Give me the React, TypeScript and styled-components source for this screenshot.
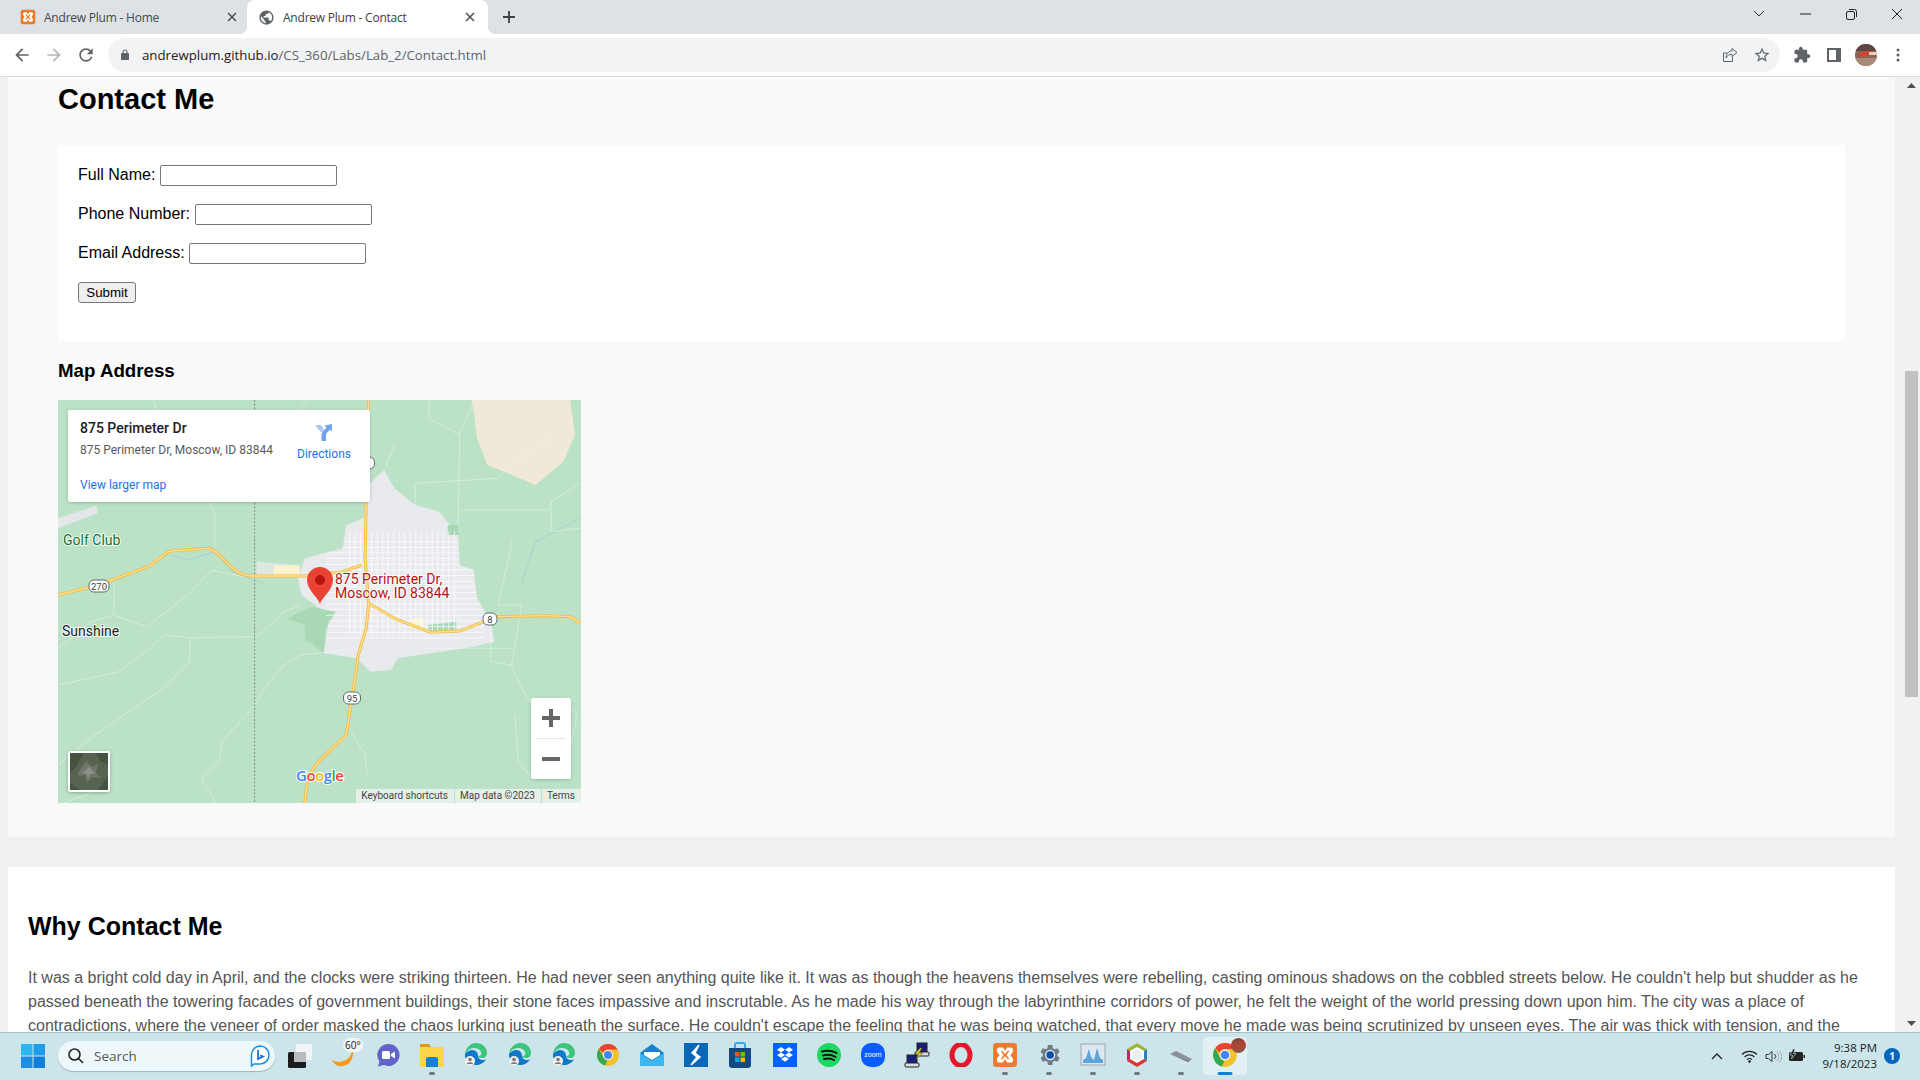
import React from 'react';
import styled, { createGlobalStyle } from 'styled-components';

const UI_FONT = `'Open Sans', 'Noto Sans', sans-serif`;
const PAGE_FONT = `'Liberation Sans', Arial, sans-serif`;
const MAP_FONT = `Roboto, 'Liberation Sans', sans-serif`;

const GlobalStyle = createGlobalStyle`
  html, body {
    margin: 0;
    padding: 0;
    height: 100%;
    overflow: hidden;
    background: #f0f0f0;
  }
  * {
    box-sizing: border-box;
  }
`;

const Icon = ({ d, size = 16, color = '#5f6368' }: { d: string; size?: number; color?: string }) => (
  <svg width={size} height={size} viewBox="0 0 24 24" fill={color}>
    <path d={d} />
  </svg>
);

const ICONS = {
  back: 'M20 11H7.83l5.59-5.59L12 4l-8 8 8 8 1.41-1.41L7.83 13H20v-2z',
  forward: 'M12 4l-1.41 1.41L16.17 11H4v2h12.17l-5.58 5.59L12 20l8-8z',
  reload:
    'M17.65 6.35C16.2 4.9 14.21 4 12 4c-4.42 0-7.99 3.58-7.99 8s3.57 8 7.99 8c3.73 0 6.84-2.55 7.73-6h-2.08c-.82 2.33-3.04 4-5.65 4-3.31 0-6-2.69-6-6s2.69-6 6-6c1.66 0 3.14.69 4.22 1.78L13 11h7V4l-2.35 2.35z',
  lock: 'M18 8h-1V6c0-2.76-2.24-5-5-5S7 3.24 7 6v2H6c-1.1 0-2 .9-2 2v10c0 1.1.9 2 2 2h12c1.1 0 2-.9 2-2V10c0-1.1-.9-2-2-2zM9 6c0-1.66 1.34-3 3-3s3 1.34 3 3v2H9V6z',
  star: 'M22 9.24l-7.19-.62L12 2 9.19 8.63 2 9.24l5.46 4.73L5.82 21 12 17.27 18.18 21l-1.63-7.03L22 9.24zM12 15.4l-3.76 2.27 1-4.28-3.32-2.88 4.38-.38L12 6.1l1.71 4.04 4.38.38-3.32 2.88 1 4.28L12 15.4z',
  puzzle:
    'M20.5 11H19V7c0-1.1-.9-2-2-2h-4V3.5C13 2.12 11.88 1 10.5 1S8 2.12 8 3.5V5H4c-1.1 0-1.99.9-1.99 2v3.8H3.5c1.49 0 2.7 1.21 2.7 2.7s-1.21 2.7-2.7 2.7H2V20c0 1.1.9 2 2 2h3.8v-1.5c0-1.49 1.21-2.7 2.7-2.7 1.49 0 2.7 1.21 2.7 2.7V22H17c1.1 0 2-.9 2-2v-4h1.5c1.38 0 2.5-1.12 2.5-2.5S21.88 11 20.5 11z',
  globe:
    'M12 2C6.48 2 2 6.48 2 12s4.48 10 10 10 10-4.48 10-10S17.52 2 12 2zm-1 17.93c-3.95-.49-7-3.85-7-7.93 0-.62.08-1.21.21-1.79L9 15v1c0 1.1.9 2 2 2v1.93zm6.9-2.54c-.26-.81-1-1.39-1.9-1.39h-1v-3c0-.55-.45-1-1-1H8v-2h2c.55 0 1-.45 1-1V7h2c1.1 0 2-.9 2-2v-.41c2.93 1.19 5 4.06 5 7.41 0 2.08-.8 3.97-2.1 5.39z',
};

const Xampp = ({ size = 16 }: { size?: number }) => (
  <svg width={size} height={size} viewBox="0 0 24 24">
    <rect x="1" y="1" width="22" height="22" rx="3" fill="#ee7a2d" />
    <path
      d="M7 5h3l2 3 2-3h3a2.5 2.5 0 0 1 2.5 2.5c0 2-1.5 3-2.5 4.5 1 1.5 2.5 2.5 2.5 4.5A2.5 2.5 0 0 1 17 19h-3l-2-3-2 3H7a2.5 2.5 0 0 1-2.5-2.5c0-2 1.500-3 2.500-4.500-1-1.500-2.500-2.500-2.500-4.500A2.500 2.500 0 0 1 7 5z"
      fill="#fff"
    />
    <path d="M8 8h1.5L12 11l2.5-3H16l-2.5 4 2.500 4h-1.500L12 13l-2.500 3H8l2.500-4z" fill="#ee7a2d" />
  </svg>
);

const Chrome = ({ size = 24 }: { size?: number }) => (
  <svg width={size} height={size} viewBox="0 0 24 24">
    <circle cx="12" cy="12" r="11" fill="#f2c12e" />
    <path d="M12 1a11 11 0 0 1 9.530 5.500H12a5.500 5.500 0 0 0-5 3.200L2.900 5.800A11 11 0 0 1 12 1z" fill="#ea4335" />
    <path d="M2.900 5.800L7.500 14.500a5.500 5.500 0 0 0 4 3L9 22.600A11 11 0 0 1 2.900 5.800z" fill="#34a853" />
    <circle cx="12" cy="12" r="5" fill="#fff" />
    <circle cx="12" cy="12" r="4" fill="#4285f4" />
  </svg>
);

const Edge = () => (
  <svg width="24" height="26" viewBox="0 0 24 26">
    <path d="M1 12C2 5 7 1 12 1c6 0 11 4 11 10 0 3-2 5-5 5-2 0-4-1-4-2 3 0 4-2 3-4-1-3-4-4-7-4-4 0-7 2-9 6z" fill="#3bc47c" />
    <path d="M1 12c2-3 5-4 7-4 4 0 6 3 6 6 0 2 2 4 5 4 1 0 2 0 3-1-2 4-6 6-10 6C6 23 0 18 1 12z" fill="#0f78c9" />
    <circle cx="6" cy="19" r="5" fill="#eeeeee" />
    <circle cx="6" cy="17.500" r="1.800" fill="#777" />
    <path d="M2.800 22c.5-2.500 5.900-2.500 6.400 0z" fill="#777" />
  </svg>
);

const Avatar = () => (
  <svg width="22" height="22" viewBox="0 0 22 22">
    <clipPath id="avatar-clip">
      <circle cx="11" cy="11" r="11" />
    </clipPath>
    <g clipPath="url(#avatar-clip)">
      <rect width="22" height="22" fill="#8a6658" />
      <rect width="22" height="7" fill="#5e453f" />
      <path d="M3 11l5-3 8-1 2 3-6 2-6 1z" fill="#d9412a" />
      <path d="M14 8h8v3h-8z" fill="#e6cfc0" />
      <path d="M0 14h22v8H0z" fill="#a98a78" />
    </g>
  </svg>
);

const TASK_APPS: { key: string; art: React.ReactNode; running?: boolean; active?: boolean }[] = [
  {
    key: 'view',
    art: (
      <svg width="26" height="26" viewBox="0 0 26 26">
        <rect x="9" y="2" width="16" height="16" rx="1.500" fill="#f2f4f5" />
        <rect x="1" y="10" width="18" height="16" rx="1.500" fill="#1c1c1c" />
        <rect x="7" y="10" width="12" height="10" fill="#b9bcbe" />
      </svg>
    ),
  },
  {
    key: 'weather',
    art: (
      <svg width="26" height="26" viewBox="0 0 26 26">
        <path d="M21 5c1 8-4 14-13 15-2 0-5-1-7-2 2 5 7 7 11 6 8-1 12-10 9-19z" fill="#f39a1f" />
      </svg>
    ),
  },
  {
    key: 'teams',
    art: (
      <svg width="24" height="24" viewBox="0 0 24 24">
        <path d="M12 1a11 11 0 1 1-4 21l-6 1.500 1.500-5A11 11 0 0 1 12 1z" fill="#6264c8" />
        <rect x="6" y="8" width="8" height="8" rx="1.500" fill="#fff" />
        <path d="M15 11l4-2.500v7L15 13z" fill="#fff" />
      </svg>
    ),
  },
  {
    key: 'files',
    running: true,
    art: (
      <svg width="26" height="26" viewBox="0 0 26 26">
        <path d="M1 2h9l2 3h13v3H1z" fill="#d99b12" />
        <rect x="1" y="5" width="24" height="20" fill="#fbd54a" />
        <path d="M7 17a2 2 0 0 1 2-2h8a2 2 0 0 1 2 2v8H7z" fill="#1680d6" />
      </svg>
    ),
  },
  { key: 'edge1', art: <Edge /> },
  { key: 'edge2', art: <Edge /> },
  { key: 'edge3', art: <Edge /> },
  { key: 'chrome', art: <Chrome /> },
  {
    key: 'mail',
    art: (
      <svg width="24" height="24" viewBox="0 0 24 24">
        <path d="M0 10L12 1l12 9v13H0z" fill="#1a7fd0" />
        <path d="M0 10l12 8 12-8v13H0z" fill="#3fb6ec" />
        <path d="M4 9h16v3l-8 5-8-5z" fill="#fff" />
      </svg>
    ),
  },
  {
    key: 'sublime',
    art: (
      <svg width="24" height="24" viewBox="0 0 24 24">
        <rect width="24" height="24" fill="#0a66b7" />
        <path d="M15 2L8 10l5 4-6 8 9-8-5-4z" fill="#fff" stroke="#fff" strokeWidth="1.500" />
      </svg>
    ),
  },
  {
    key: 'store',
    art: (
      <svg width="24" height="26" viewBox="0 0 24 26">
        <path d="M7 6V3a2 2 0 0 1 2-2h6a2 2 0 0 1 2 2v3" fill="none" stroke="#38a7e0" strokeWidth="2" />
        <path d="M1 6h22v17a3 3 0 0 1-3 3H4a3 3 0 0 1-3-3z" fill="#144a80" />
        <rect x="7" y="10" width="4.500" height="4.500" fill="#f25022" />
        <rect x="12.500" y="10" width="4.500" height="4.500" fill="#7fba00" />
        <rect x="7" y="15.500" width="4.500" height="4.500" fill="#00a4ef" />
        <rect x="12.500" y="15.500" width="4.500" height="4.500" fill="#ffb900" />
      </svg>
    ),
  },
  {
    key: 'dropbox',
    art: (
      <svg width="24" height="24" viewBox="0 0 24 24">
        <rect width="24" height="24" fill="#0061fe" />
        <path d="M8 4l4 2.700L8 9.400 4 6.700zM16 4l4 2.700-4 2.700-4-2.700zM8 9.400l4 2.700-4 2.700-4-2.700zM16 9.400l4 2.700-4 2.700-4-2.700zM8 16l4-2.600 4 2.600-4 2.700z" fill="#fff" />
      </svg>
    ),
  },
  {
    key: 'spotify',
    art: (
      <svg width="24" height="24" viewBox="0 0 24 24">
        <circle cx="12" cy="12" r="12" fill="#1ed760" />
        <path d="M5 8.500c5-1.500 10-1 14.500 1.500M6 12.500c4-1 9-.7 12.500 1.500M7 16c3.500-.8 7.500-.5 10 1" fill="none" stroke="#111" strokeWidth="2" strokeLinecap="round" />
      </svg>
    ),
  },
  {
    key: 'zoom',
    art: (
      <svg width="24" height="24" viewBox="0 0 24 24">
        <rect width="24" height="24" rx="10" fill="#0b5cff" />
        <text x="12" y="14" textAnchor="middle" fontFamily={MAP_FONT} fontSize="7" fill="#fff">
          zoom
        </text>
      </svg>
    ),
  },
  {
    key: 'putty',
    art: (
      <svg width="26" height="26" viewBox="0 0 26 26">
        <rect x="13" y="1" width="10" height="9" fill="#1b1f7a" stroke="#222" />
        <rect x="11" y="10" width="14" height="4" rx="1" fill="#ddd" stroke="#222" />
        <rect x="3" y="13" width="10" height="9" fill="#1b1f7a" stroke="#222" />
        <rect x="1" y="21" width="14" height="4" rx="1" fill="#ddd" stroke="#222" />
        <path d="M16 6l-5 6h4l-4 6 8-7h-4l3-5z" fill="#f6d81c" stroke="#333" strokeWidth=".5" />
      </svg>
    ),
  },
  {
    key: 'opera',
    art: (
      <svg width="24" height="24" viewBox="0 0 24 24">
        <ellipse cx="12" cy="12" rx="9" ry="10.500" fill="none" stroke="#e5182a" strokeWidth="5" />
      </svg>
    ),
  },
  { key: 'xampp', running: true, art: <Xampp size={26} /> },
  {
    key: 'settings',
    running: true,
    art: (
      <svg width="28" height="28" viewBox="0 0 24 24">
        <path d="M19.140 12.940a7.400 7.400 0 0 0 0-1.880l2.030-1.580-1.920-3.320-2.390.96a7 7 0 0 0-1.620-.94L14.880 3.500h-3.840l-.36 2.680a7 7 0 0 0-1.620.94l-2.390-.96-1.920 3.320 2.030 1.580a7.400 7.400 0 0 0 0 1.880l-2.030 1.580 1.920 3.320 2.390-.96c.5.380 1.040.7 1.620.94l.36 2.680h3.840l.36-2.680a7 7 0 0 0 1.620-.94l2.390.96 1.920-3.320z" fill="#6f7b86" />
        <circle cx="13" cy="12" r="3.800" fill="#0a4ea8" stroke="#dfe6ea" strokeWidth="1.200" />
      </svg>
    ),
  },
  {
    key: 'monitor',
    running: true,
    art: (
      <svg width="26" height="24" viewBox="0 0 26 24">
        <rect x="1" y="1" width="24" height="21" fill="#dfe7ee" stroke="#9aa5ad" />
        <path d="M3 20V17l3-2 3-9 2 8 3 3 3-12 3 10 3 2v3z" fill="#5aa5dc" />
      </svg>
    ),
  },
  {
    key: 'box',
    running: true,
    art: (
      <svg width="24" height="26" viewBox="0 0 24 26">
        <path d="M12 1l10 6v12l-10 6-10-6V7z" fill="#fff" />
        <path d="M12 1l10 6-3 2-7-4-7 4-3-2z" fill="#9ab83c" />
        <path d="M2 7l3 2v8l-3 2z" fill="#c2246a" />
        <path d="M22 7l-3 2v8l3 2z" fill="#2d7fc1" />
        <path d="M2 19l3-2 7 4 7-4 3 2-10 6z" fill="#d9362f" />
        <path d="M7 10l5-3 5 3v6l-5 3-5-3z" fill="#e8eef0" />
      </svg>
    ),
  },
  {
    key: 'snip',
    running: true,
    art: (
      <svg width="24" height="16" viewBox="0 0 24 16">
        <path d="M1 7l6-3 16 8-4 2z" fill="#8b9297" />
        <path d="M1 7l18 7 4-2-4 3z" fill="#4f5459" />
      </svg>
    ),
  },
  {
    key: 'chrome-active',
    active: true,
    art: <Chrome size={26} />,
  },
];

const App: React.FC = () => {
  return (
    <Screen>
      <GlobalStyle />
      <TabStrip>
        <Tab>
          <Xampp />
          <TabTitle>Andrew Plum - Home</TabTitle>
          <CloseGlyph />
        </Tab>
        <Tab $active>
          <Icon d={ICONS.globe} size={17} />
          <TabTitle>Andrew Plum - Contact</TabTitle>
          <CloseGlyph />
        </Tab>
        <NewTab>
          <svg width="14" height="14" viewBox="0 0 14 14">
            <path d="M7 1v12M1 7h12" stroke="#3c4043" strokeWidth="1.800" />
          </svg>
        </NewTab>
        <WindowControls>
          <WindowButton>
            <svg width="12" height="8" viewBox="0 0 12 8">
              <path d="M1 1l5 5 5-5" fill="none" stroke="#333" />
            </svg>
          </WindowButton>
          <WindowButton>
            <svg width="11" height="2" viewBox="0 0 11 2">
              <path d="M0 1h11" stroke="#222" />
            </svg>
          </WindowButton>
          <WindowButton>
            <svg width="11" height="11" viewBox="0 0 11 11">
              <rect x=".5" y="2.500" width="8" height="8" rx="1.500" fill="none" stroke="#222" />
              <path d="M3 .5h5.500a2 2 0 0 1 2 2V8" fill="none" stroke="#222" />
            </svg>
          </WindowButton>
          <WindowButton>
            <svg width="12" height="12" viewBox="0 0 12 12">
              <path d="M1 1l10 10M11 1L1 11" stroke="#222" />
            </svg>
          </WindowButton>
        </WindowControls>
      </TabStrip>

      <Toolbar>
        <ToolButton>
          <Icon d={ICONS.back} size={20} />
        </ToolButton>
        <ToolButton>
          <Icon d={ICONS.forward} size={20} color="#b4b6b9" />
        </ToolButton>
        <ToolButton>
          <Icon d={ICONS.reload} size={20} />
        </ToolButton>
        <Omnibox>
          <LockSlot>
            <Icon d={ICONS.lock} size={12} />
          </LockSlot>
          <Url>
            andrewplum.github.io<UrlPath>/CS_360/Labs/Lab_2/Contact.html</UrlPath>
          </Url>
          <ToolButton>
            <svg width="16" height="16" viewBox="0 0 16 16" fill="none" stroke="#5f6368" strokeWidth="1">
              <path d="M10.500 9.500V14.500H1.500V6H5" />
              <path d="M10 1.500L15 5.500 10 9.500V7.300C7 7.300 5.500 8.500 4 11 4 7.500 6 4 10 3.800z" />
            </svg>
          </ToolButton>
          <ToolButton>
            <Icon d={ICONS.star} size={18} />
          </ToolButton>
        </Omnibox>
        <ToolButton>
          <Icon d={ICONS.puzzle} size={18} />
        </ToolButton>
        <ToolButton>
          <svg width="14" height="14" viewBox="0 0 14 14">
            <path fillRule="evenodd" d="M0 0h14v14H0zM2 2v10h7V2z" fill="#5f6368" />
          </svg>
        </ToolButton>
        <ToolButton>
          <Avatar />
        </ToolButton>
        <ToolButton>
          <svg width="4" height="14" viewBox="0 0 4 14" fill="#5f6368">
            <circle cx="2" cy="2" r="1.500" />
            <circle cx="2" cy="7" r="1.500" />
            <circle cx="2" cy="12" r="1.500" />
          </svg>
        </ToolButton>
      </Toolbar>

      <Viewport>
        <Page>
          <ContactCard>
            <PageTitle>Contact Me</PageTitle>
            <FormBox>
              <FormRow>
                Full Name: <TextInput />
              </FormRow>
              <FormRow>
                Phone Number: <TextInput />
              </FormRow>
              <FormRow>
                Email Address: <TextInput />
              </FormRow>
              <SubmitButton>Submit</SubmitButton>
            </FormBox>
            <MapTitle>Map Address</MapTitle>
            <MapFrame>
              <MapDrawing />
              <InfoCard>
                <InfoText>
                  <PlaceName>875 Perimeter Dr</PlaceName>
                  <PlaceAddress>875 Perimeter Dr, Moscow, ID 83844</PlaceAddress>
                  <LargerMap>View larger map</LargerMap>
                </InfoText>
                <Directions>
                  <svg width="20" height="20" viewBox="0 0 20 20">
                    <path d="M1 3h6l3 5-3 2.500z" fill="#a9c7f5" />
                    <path d="M7.500 19v-6c0-3 3-5 5-7.500L10.500 3.500 18 2v7.500L16 7.500c-2 2.500-4 3.500-4 6V19z" fill="#6fa3ee" />
                  </svg>
                  <span>Directions</span>
                </Directions>
              </InfoCard>
              <ZoomControl>
                <ZoomButton>
                  <svg width="18" height="18" viewBox="0 0 18 18">
                    <path d="M9 0v18M0 9h18" stroke="#666" strokeWidth="4" />
                  </svg>
                </ZoomButton>
                <ZoomDivider />
                <ZoomButton>
                  <svg width="18" height="4" viewBox="0 0 18 4">
                    <path d="M0 2h18" stroke="#666" strokeWidth="4" />
                  </svg>
                </ZoomButton>
              </ZoomControl>
              <SatelliteThumb>
                <svg width="38" height="37" viewBox="0 0 38 37">
                  <rect width="38" height="37" fill="#566350" />
                  <path d="M0 0h14L6 14 0 20zM26 0h12v12L30 8zM28 37l10-14v14zM0 30l10 7H0z" fill="#45523f" />
                  <path d="M8 20l8-12 6 6 6-4-2 10 6 5-10-1-5 6-2-8-6 1z" fill="#6f776a" />
                  <path d="M15 18l5-5 2 5 4 2-6 1-2 5-1-5-4-1z" fill="#8d9288" />
                </svg>
              </SatelliteThumb>
              <Attribution>
                <AttributionItem>Keyboard shortcuts</AttributionItem>
                <AttributionItem>Map data ©2023</AttributionItem>
                <AttributionItem>Terms</AttributionItem>
              </Attribution>
            </MapFrame>
          </ContactCard>
          <WhyCard>
            <SectionTitle>Why Contact Me</SectionTitle>
            <Story>
              It was a bright cold day in April, and the clocks were striking thirteen. He had never seen anything
              quite like it. It was as though the heavens themselves were rebelling, casting ominous shadows on the
              cobbled streets below. He couldn't help but shudder as he passed beneath the towering facades of
              government buildings, their stone faces impassive and inscrutable. As he made his way through the
              labyrinthine corridors of power, he felt the weight of the world pressing down upon him. The city was a
              place of contradictions, where the veneer of order masked the chaos lurking just beneath the surface.
              He couldn't escape the feeling that he was being watched, that every move he made was being scrutinized
              by unseen eyes. The air was thick with tension, and the
            </Story>
          </WhyCard>
        </Page>
        <Scrollbar>
          <ScrollArrow>
            <svg width="9" height="5" viewBox="0 0 9 5">
              <path d="M4.500 0L9 5H0z" fill="#505050" />
            </svg>
          </ScrollArrow>
          <ScrollTrack>
            <ScrollThumb />
          </ScrollTrack>
          <ScrollArrow>
            <svg width="9" height="5" viewBox="0 0 9 5">
              <path d="M0 0h9L4.500 5z" fill="#505050" />
            </svg>
          </ScrollArrow>
        </Scrollbar>
      </Viewport>

      <Taskbar>
        <StartButton>
          <svg width="24" height="24" viewBox="0 0 24 24">
            <path d="M0 0h11.500v11.500H0z" fill="#2fb4f2" />
            <path d="M12.500 0H24v11.500H12.500z" fill="#1f9cea" />
            <path d="M0 12.500h11.500V24H0z" fill="#1a8fe3" />
            <path d="M12.500 12.500H24V24H12.500z" fill="#0f7fd8" />
          </svg>
        </StartButton>
        <SearchPill>
          <svg width="18" height="18" viewBox="0 0 18 18" fill="none" stroke="#222" strokeWidth="1.600">
            <circle cx="7.500" cy="7.500" r="5.500" />
            <path d="M11.500 11.500L16 16" />
          </svg>
          <SearchLabel>Search</SearchLabel>
          <svg width="20" height="22" viewBox="0 0 20 22">
            <path d="M10 1a9 9 0 0 1 0 18H4l-2.500 2V10A9 9 0 0 1 10 1z" fill="#fff" stroke="#1b8fe8" strokeWidth="1.500" />
            <path d="M8 5v9l5-2.500-2.800-1.200" fill="none" stroke="#1b6fe0" strokeWidth="1.800" />
          </svg>
        </SearchPill>
        <TaskList>
          {TASK_APPS.map((app) => (
            <TaskItem key={app.key} $running={app.running} $active={app.active}>
              {app.art}
              {app.key === 'weather' && <WeatherBadge>60°</WeatherBadge>}
              {app.active && <AvatarBadge />}
            </TaskItem>
          ))}
        </TaskList>
        <Tray>
          <TrayIcon $gap={8}>
            <svg width="12" height="7" viewBox="0 0 12 7">
              <path d="M1 6l5-5 5 5" fill="none" stroke="#222" strokeWidth="1.300" />
            </svg>
          </TrayIcon>
          <TrayIcon>
            <svg width="17" height="13" viewBox="0 0 17 13" fill="none" stroke="#222" strokeWidth="1.100">
              <path d="M1 4.500a10.500 10.500 0 0 1 15 0M3.500 7a7 7 0 0 1 10 0M6 9.500a3.500 3.500 0 0 1 5 0" />
              <circle cx="8.500" cy="11.500" r=".8" fill="#222" />
            </svg>
          </TrayIcon>
          <TrayIcon>
            <svg width="17" height="13" viewBox="0 0 17 13" fill="none" stroke="#333" strokeWidth="1">
              <path d="M1 4.500h2.500L7 1.500v10L3.500 8.500H1z" />
              <path d="M9.500 4a3.500 3.500 0 0 1 0 5" />
              <path d="M12 2a7 7 0 0 1 0 9M14.500.5a9.500 9.500 0 0 1 0 12" stroke="#aaa" />
            </svg>
          </TrayIcon>
          <TrayIcon>
            <svg width="18" height="14" viewBox="0 0 18 14">
              <rect x="1" y="3" width="14" height="9" rx="1.500" fill="#222" />
              <rect x="15.500" y="6" width="1.500" height="3" fill="#222" />
              <path d="M5 0L2 6h2.500L3.500 10 8 4.500H5.500L7 0z" fill="#222" stroke="#cbe5ec" strokeWidth=".6" />
            </svg>
          </TrayIcon>
          <Clock>
            <span>9:38 PM</span>
            <span>9/18/2023</span>
          </Clock>
          <NotificationBadge>1</NotificationBadge>
        </Tray>
      </Taskbar>
    </Screen>
  );
};

export default App;

const CloseGlyph = () => (
  <CloseSlot>
    <svg width="10" height="10" viewBox="0 0 10 10">
      <path d="M1 1l8 8M9 1L1 9" stroke="#4b4e52" strokeWidth="1.500" />
    </svg>
  </CloseSlot>
);

// coordinates traced at 2.904 x 3 from the reference crop, origin 50,395 of the page
const WHITE_ROADS = [
  'M460 321L478 350V460',
  'M23 760L120 680 185 660 186 570',
  'M23 870L200 830 290 760 330 720 410 728 600 725 640 690 680 650 730 630',
  'M408 728L405 800 330 880 130 1020 23 1110',
  'M185 660L280 695 400 600 470 525 560 545',
  'M595 930L500 1040 490 1100 440 1150 480 1224',
  'M900 760L730 780 680 810 630 870 595 930',
  'M1100 20V70L1190 120 1185 390',
  'M1000 150L975 215',
  'M1190 345H1450L1455 320 1540 265',
  'M1455 320V410L1540 400',
  'M1060 270V330',
  'M1060 265L1300 250 1340 205 1450 130',
  'M1340 440L1330 500 1300 630H1370L1340 810 1280 800V680',
  'M1100 760H1340',
  'M1340 810L1370 880 1400 930',
  'M870 1000L915 1080 920 1140',
  'M1500 920L1530 960 1510 1060',
  'M1350 960L1360 1100 1400 1150',
  'M1230 20L1187 120',
  'M300 15L310 45',
  'M720 45L750 15',
  'M40 1224L180 1170',
];

const CITY_SHAPE =
  'M970 225L1000 280 1060 330 1130 350 1185 420 1190 510 1230 525 1240 610 1280 680 1290 740 1230 755 1010 790 990 825 930 830 890 790 795 775 810 670 770 630 730 600 720 550 740 490 850 460 860 390 910 370 925 270z';

const HIGHWAYS = [
  'M23 600L110 578 180 555 285 515C310 500 330 475 350 468L460 460C480 465 500 490 520 510 540 530 555 540 580 543L740 543 850 530 905 510',
  'M925 15L918 320 915 490 925 630 918 700 895 780 880 890 860 1020 780 1100C760 1125 745 1145 740 1224',
  'M925 625L1000 670 1105 712 1190 708 1260 680 1300 665 1440 662 1510 665 1542 685',
];

const MapDrawing: React.FC = () => (
  <MapSvg width="523" height="403" viewBox="0 0 523 403">
    <defs>
      <clipPath id="city">
        <path d={CITY_SHAPE} />
      </clipPath>
    </defs>
    <rect width="523" height="403" fill="#bbe2c6" />
    <g transform="translate(-8 -5) scale(.3444 .3333)">
      <path d="M1225 15L1240 130 1270 210 1410 270 1490 200 1525 120 1510 15z" fill="#f0e9d8" />
      <path d="M23 370L135 332 138 355 23 400z" fill="#e4e7ea" />
      <path d="M600 500L720 510V540H600z" fill="#dfe8dc" />
      <path d="M650 512H725V540H650z" fill="#fbf3cf" />
      <path d="M915 790H1010L990 825 930 830z" fill="#d5dcd8" />
      <path d={CITY_SHAPE} fill="#e8eaed" />
      <path d="M690 670L760 635 830 650 800 700 795 775 740 730 740 690z" fill="#a8d8b4" />
      <path d="M1095 690L1180 680V705L1105 712z" fill="#a8d8b4" />
      <path d="M1155 390H1185V420H1155z" fill="#a8d8b4" />
      <path d="M1050 670H1085V700H1050z" fill="#fbf3cf" />
      <g clipPath="url(#city)" stroke="#fff" strokeWidth="2.500" fill="none" opacity=".9">
        {Array.from({ length: 20 }, (_, i) => (
          <path key={`v${i}`} d={`M${870 + i * 16} 410V720`} />
        ))}
        {Array.from({ length: 18 }, (_, i) => (
          <path key={`h${i}`} d={`M800 ${440 + i * 17}H1260`} />
        ))}
      </g>
      <g stroke="#fff" strokeWidth="2" fill="none" opacity=".55">
        {WHITE_ROADS.map((d) => (
          <path key={d} d={d} />
        ))}
      </g>
      <g stroke="#9dc9dc" strokeWidth="2" fill="none">
        <path d="M1540 370L1410 440 1370 560" />
        <path d="M350 480L400 495 480 470 530 530 620 565" />
      </g>
      <path d="M594 15V1224" stroke="#7a7a7a" strokeWidth="2.500" strokeDasharray="6 5" />
      <g fill="none" strokeLinejoin="round">
        {HIGHWAYS.map((d) => (
          <path key={d} d={d} stroke="#f5b83d" strokeWidth="9" />
        ))}
        {HIGHWAYS.map((d) => (
          <path key={`${d}-in`} d={d} stroke="#fde293" strokeWidth="4" />
        ))}
      </g>
    </g>

    <Shield cx={41} cy={186} w={20} label="270" />
    <Shield cx={432} cy={219} w={14} label="8" />
    <Shield cx={294} cy={298} w={17} label="95" />
    <Shield cx={308} cy={63} w={17} label="" />

    <path d="M262 204c-2-7-13-14-13-24a13 13 0 0 1 26 0c0 10-11 17-13 24z" fill="#ea4335" />
    <circle cx="262" cy="180" r="5" fill="#b31412" />

    <MapLabel x="277" y="184" fill="#b31412">875 Perimeter Dr,</MapLabel>
    <MapLabel x="277" y="198" fill="#b31412">Moscow, ID 83844</MapLabel>
    <MapLabel x="5" y="145" fill="#137333">Golf Club</MapLabel>
    <MapLabel x="4" y="236" fill="#202124">Sunshine</MapLabel>
    <GoogleMark x="238" y="381">
      <tspan fill="#4285f4">G</tspan>
      <tspan fill="#ea4335">o</tspan>
      <tspan fill="#fbbc04">o</tspan>
      <tspan fill="#4285f4">g</tspan>
      <tspan fill="#34a853">l</tspan>
      <tspan fill="#ea4335">e</tspan>
    </GoogleMark>
  </MapSvg>
);

const Shield = ({ cx, cy, w, label }: { cx: number; cy: number; w: number; label: string }) => (
  <g>
    <rect x={cx - w / 2} y={cy - 6} width={w} height={12} rx={5} fill="#fff" stroke="#5f6a6e" />
    <text x={cx} y={cy + 3.5} textAnchor="middle" fontFamily={MAP_FONT} fontSize="9.500" fill="#3c4043">
      {label}
    </text>
  </g>
);

const Screen = styled.div`
  width: 1920px;
  height: 1080px;
  display: flex;
  flex-direction: column;
  overflow: hidden;
  font-family: ${UI_FONT};
`;

const TabStrip = styled.div`
  height: 34px;
  padding-left: 8px;
  flex: none;
  display: flex;
  background: #dee1e6;
`;

const Tab = styled.div<{ $active?: boolean }>`
  width: ${(p) => (p.$active ? 241 : 239)}px;
  height: 34px;
  padding: 0 ${(p) => (p.$active ? 10 : 7)}px 0 ${(p) => (p.$active ? 11 : 12)}px;
  position: relative;
  display: flex;
  align-items: center;
  border-radius: 8px 8px 0 0;
  background: ${(p) => (p.$active ? '#fff' : 'transparent')};
  color: ${(p) => (p.$active ? '#3c4043' : '#45494e')};

  ${(p) =>
    p.$active &&
    `
    &::before, &::after {
      content: '';
      position: absolute;
      bottom: 0;
      width: 8px;
      height: 8px;
    }
    &::before {
      left: -8px;
      background: radial-gradient(circle at 0 0, transparent 8px, #fff 8.5px);
    }
    &::after {
      right: -8px;
      background: radial-gradient(circle at 100% 0, transparent 8px, #fff 8.5px);
    }
  `}
`;

const TabTitle = styled.span`
  margin-left: 8px;
  flex: 1;
  font-size: 12px;
  letter-spacing: -0.22px;
  white-space: nowrap;
`;

const CloseSlot = styled.span`
  width: 16px;
  height: 16px;
  display: flex;
  align-items: center;
  justify-content: center;
`;

const NewTab = styled.div`
  width: 30px;
  height: 34px;
  margin-left: 6px;
  display: flex;
  align-items: center;
  justify-content: center;
`;

const WindowControls = styled.div`
  margin-left: auto;
  display: flex;
`;

const WindowButton = styled.div`
  width: 46px;
  height: 28px;
  display: flex;
  align-items: center;
  justify-content: center;
`;

const Toolbar = styled.div`
  height: 43px;
  padding: 4px 6px 5px;
  flex: none;
  display: flex;
  align-items: center;
  background: #fff;
  border-bottom: 1px solid #dadce0;
`;

const ToolButton = styled.div`
  width: 32px;
  height: 32px;
  flex: none;
  display: flex;
  align-items: center;
  justify-content: center;
`;

const Omnibox = styled.div`
  width: 1672px;
  height: 34px;
  margin: 0 6px;
  padding-right: 2px;
  display: flex;
  align-items: center;
  border-radius: 17px;
  background: #f1f3f4;
`;

const LockSlot = styled.div`
  width: 34px;
  display: flex;
  justify-content: center;
`;

const Url = styled.div`
  flex: 1;
  font-size: 13.25px;
  color: #202124;
  white-space: nowrap;
`;

const UrlPath = styled.span`
  color: #5f6368;
`;

const Viewport = styled.div`
  flex: 1;
  min-height: 0;
  display: flex;
  background: #f0f0f0;
`;

const Page = styled.div`
  width: 1903px;
  padding: 0 8px;
  overflow: hidden;
`;

const ContactCard = styled.section`
  height: 760px;
  margin-bottom: 30px;
  padding: 6px 50px 0;
  background: #f9f9f9;
`;

const PageTitle = styled.h1`
  margin: 0 0 29px;
  font-family: ${PAGE_FONT};
  font-size: 29px;
  line-height: 33px;
  font-weight: 700;
  color: #000;
`;

const FormBox = styled.form`
  height: 196px;
  padding: 20px;
  background: #fff;
`;

const FormRow = styled.label`
  height: 21px;
  margin-bottom: 18px;
  display: flex;
  align-items: flex-start;
  font-family: ${PAGE_FONT};
  font-size: 16px;
  line-height: 20px;
  color: #000;
  white-space: pre;
`;

const TextInput = styled.input`
  width: 177px;
  height: 21px;
  padding: 1px 2px;
  background: #fff;
  border: 1px solid #767676;
  border-radius: 2px;
`;

const SubmitButton = styled.button.attrs({ type: 'button' })`
  width: 58px;
  height: 21px;
  padding: 0;
  display: block;
  background: #efefef;
  border: 1px solid #767676;
  border-radius: 3px;
  font-family: ${PAGE_FONT};
  font-size: 13.33px;
  color: #000;
`;

const MapTitle = styled.h3`
  margin: 19px 0 18px;
  font-family: ${PAGE_FONT};
  font-size: 18.72px;
  font-weight: 700;
  line-height: 22px;
  color: #000;
`;

const MapFrame = styled.div`
  width: 523px;
  height: 403px;
  position: relative;
  overflow: hidden;
`;

const MapSvg = styled.svg`
  display: block;
`;

const MapLabel = styled.text`
  font-family: ${MAP_FONT};
  font-size: 14px;
  paint-order: stroke;
  stroke: #ffffff;
  stroke-width: 2px;
  stroke-opacity: 0.85;
`;

const GoogleMark = styled.text`
  font-family: 'Open Sans', ${MAP_FONT};
  font-size: 15px;
  font-weight: 600;
  letter-spacing: -0.5px;
  paint-order: stroke;
  stroke: #ffffff;
  stroke-width: 2px;
`;

const InfoCard = styled.div`
  width: 302px;
  height: 92px;
  padding: 9px 19px 0 12px;
  position: absolute;
  top: 10px;
  left: 10px;
  display: flex;
  justify-content: space-between;
  background: #fff;
  border-radius: 2px;
  box-shadow: 0 1px 4px -1px rgba(0, 0, 0, 0.3);
  font-family: ${MAP_FONT};
`;

const InfoText = styled.div`
  display: flex;
  flex-direction: column;
`;

const PlaceName = styled.div`
  font-size: 14px;
  font-weight: 500;
  line-height: 18px;
  color: #202124;
`;

const PlaceAddress = styled.div`
  margin-top: 5px;
  font-size: 12px;
  line-height: 16px;
  color: #5b5b5b;
`;

const LargerMap = styled.a`
  margin-top: 19px;
  font-size: 12px;
  line-height: 16px;
  color: #1a73e8;
`;

const Directions = styled.div`
  width: 54px;
  padding-top: 3px;
  display: flex;
  flex-direction: column;
  align-items: center;
  gap: 5px;
  font-size: 12px;
  line-height: 14px;
  color: #1a73e8;
`;

const ZoomControl = styled.div`
  width: 40px;
  height: 81px;
  position: absolute;
  top: 298px;
  left: 473px;
  display: flex;
  flex-direction: column;
  align-items: center;
  background: #fff;
  border-radius: 2px;
  box-shadow: 0 1px 4px -1px rgba(0, 0, 0, 0.3);
`;

const ZoomButton = styled.div`
  width: 40px;
  flex: 1;
  display: flex;
  align-items: center;
  justify-content: center;
`;

const ZoomDivider = styled.div`
  width: 30px;
  height: 1px;
  background: #e6e6e6;
`;

const SatelliteThumb = styled.div`
  width: 42px;
  height: 41px;
  position: absolute;
  top: 351px;
  left: 10px;
  border: 2px solid #fff;
  border-radius: 2px;
  box-shadow: 0 1px 4px -1px rgba(0, 0, 0, 0.4);

  svg {
    display: block;
  }
`;

const Attribution = styled.div`
  height: 14px;
  position: absolute;
  right: 0;
  bottom: 0;
  display: flex;
  gap: 1px;
  font-family: ${MAP_FONT};
  font-size: 10px;
  line-height: 14px;
  color: #444;
`;

const AttributionItem = styled.span`
  padding: 0 6px 0 5px;
  background: rgba(245, 245, 245, 0.72);
`;

const WhyCard = styled.section`
  height: 400px;
  padding: 45px 20px 0;
  background: #fff;
`;

const SectionTitle = styled.h2`
  margin: 0 0 25px;
  font-family: ${PAGE_FONT};
  font-size: 25px;
  line-height: 29px;
  font-weight: 700;
  color: #000;
`;

const Story = styled.p`
  margin: 0;
  font-family: ${PAGE_FONT};
  font-size: 16px;
  line-height: 24px;
  color: #555;
`;

const Scrollbar = styled.div`
  width: 17px;
  flex: none;
  display: flex;
  flex-direction: column;
  background: #f1f1f1;
`;

const ScrollArrow = styled.div`
  height: 17px;
  flex: none;
  display: flex;
  align-items: center;
  justify-content: center;
`;

const ScrollTrack = styled.div`
  flex: 1;
  padding: 277px 2px 0;
`;

const ScrollThumb = styled.div`
  height: 326px;
  background: #c1c1c1;
`;

const Taskbar = styled.div`
  height: 48px;
  flex: none;
  padding: 0 0 1px 11px;
  display: flex;
  align-items: center;
  background: #cbe5eb;
  border-top: 1px solid #aebfc5;
`;

const StartButton = styled.div`
  width: 44px;
  height: 44px;
  display: flex;
  align-items: center;
  justify-content: center;
`;

const SearchPill = styled.div`
  width: 217px;
  height: 30px;
  margin-left: 3px;
  padding: 0 5px 0 9px;
  display: flex;
  align-items: center;
  border-radius: 15px;
  background: #eef7f9;
  box-shadow: 0 1px 1px rgba(0, 0, 0, 0.2);
`;

const SearchLabel = styled.span`
  margin-left: 9px;
  flex: 1;
  font-size: 13.5px;
  color: #555;
`;

const TaskList = styled.div`
  margin-left: 3px;
  display: flex;
`;

const TaskItem = styled.div<{ $running?: boolean; $active?: boolean }>`
  width: 44.05px;
  height: 38px;
  padding-bottom: 2px;
  position: relative;
  display: flex;
  align-items: center;
  justify-content: center;
  border-radius: 4px;
  background: ${(p) => (p.$active ? '#e2f0f4' : 'transparent')};

  ${(p) =>
    (p.$running || p.$active) &&
    `
    &::after {
      content: '';
      position: absolute;
      bottom: 0;
      left: 50%;
      width: ${p.$active ? 15 : 6}px;
      height: 3px;
      transform: translateX(-50%);
      border-radius: 2px;
      background: ${p.$active ? '#0f7fd8' : '#6f7a7e'};
    }
  `}
`;

const WeatherBadge = styled.span`
  height: 14px;
  padding: 0 2px;
  position: absolute;
  top: 1px;
  left: 21px;
  border-radius: 7px;
  background: #f4f4f4;
  font-size: 10px;
  line-height: 14px;
  color: #222;
`;

const AvatarBadge = styled.span`
  width: 15px;
  height: 15px;
  position: absolute;
  top: 1px;
  right: 1px;
  border-radius: 50%;
  background: linear-gradient(170deg, #6d4a42 0%, #b5412f 45%, #7d5e52 100%);
`;

const Tray = styled.div`
  margin-left: auto;
  padding-right: 43px;
  position: relative;
  display: flex;
  align-items: center;
`;

const TrayIcon = styled.div<{ $gap?: number }>`
  width: 24px;
  margin-right: ${(p) => p.$gap ?? 0}px;
  display: flex;
  justify-content: center;
`;

const Clock = styled.div`
  width: 68px;
  display: flex;
  flex-direction: column;
  align-items: flex-end;
  font-size: 11.5px;
  line-height: 16px;
  color: #222;
`;

const NotificationBadge = styled.div`
  width: 16px;
  height: 16px;
  position: absolute;
  top: 0;
  bottom: 0;
  right: 20px;
  margin: auto 0;
  display: flex;
  align-items: center;
  justify-content: center;
  border-radius: 50%;
  background: #0067c0;
  font-size: 10px;
  font-weight: 700;
  color: #fff;
`;
